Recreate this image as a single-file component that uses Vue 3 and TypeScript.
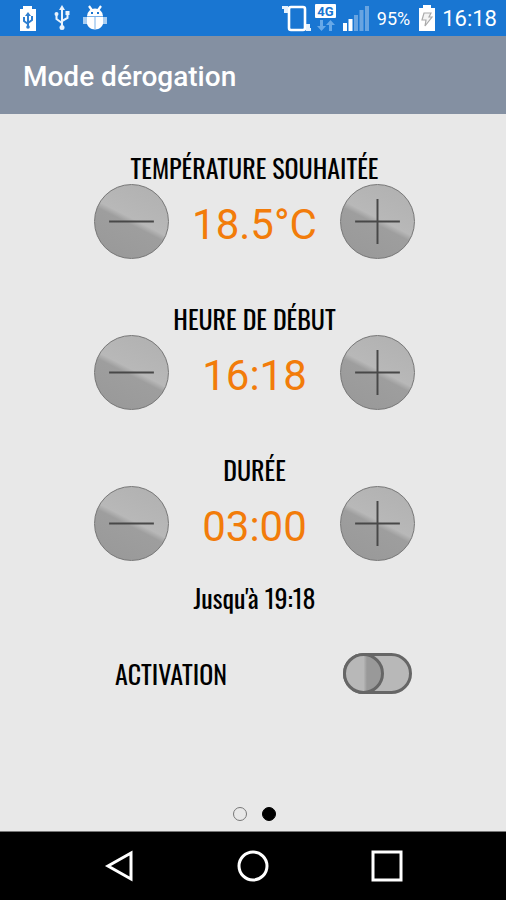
<script setup lang="ts">
import { computed, ref } from 'vue'

type Field = 'temp' | 'start' | 'duration'

const temperature = ref(18.5)
const start = ref(16 * 60 + 18)
const duration = ref(180)
const active = ref(false)

function clock(minutes: number): string {
  const m = ((minutes % 1440) + 1440) % 1440
  return `${String(Math.floor(m / 60)).padStart(2, '0')}:${String(m % 60).padStart(2, '0')}`
}

const fields = computed(() => [
  { id: 'temp' as Field, label: 'TEMPÉRATURE SOUHAITÉE', value: `${temperature.value.toFixed(1)}°C` },
  { id: 'start' as Field, label: 'HEURE DE DÉBUT', value: clock(start.value) },
  { id: 'duration' as Field, label: 'DURÉE', value: clock(duration.value) },
])
const until = computed(() => clock(start.value + duration.value))

function step(id: Field, dir: number) {
  if (id === 'temp') temperature.value += dir * 0.5
  else if (id === 'start') start.value += dir
  else duration.value = Math.max(0, duration.value + dir * 30)
}
</script>

<template>
  <div class="screen">
    <div class="status">
      <div class="status-side">
        <svg class="s-usbbat" width="18" height="28" viewBox="0 0 18 28">
          <path d="M4 2h9v3h4v22H1V5h3z" fill="#fff" />
          <path d="M9 10v14M5 13v4l4 3M13 12v4l-4 3" fill="none" stroke="#2f7fd0" stroke-width="2" />
          <path d="M6 12l3-4 3 4z" fill="#2f7fd0" />
          <circle cx="9" cy="23" r="1.800" fill="#2f7fd0" />
        </svg>
        <svg class="s-usb" width="16" height="26" viewBox="0 0 16 26">
          <path d="M8 4v18M2.500 9v5l5.500 4M13.500 8v5L8 16" fill="none" stroke="#e9f3fd" stroke-width="2" />
          <path d="M5 5l3-5 3 5z" fill="#e9f3fd" />
          <circle cx="8" cy="22.500" r="2.500" fill="#e9f3fd" />
          <circle cx="2.500" cy="9" r="2" fill="#e9f3fd" />
          <path d="M11.500 6h4v4h-4z" fill="#e9f3fd" />
        </svg>
        <svg class="s-bug" width="26" height="26" viewBox="0 0 26 26">
          <path d="M7 1l3.500 5M19 1l-3.500 5" stroke="#fff" stroke-width="2.200" />
          <path d="M5 11a8 7.500 0 0 1 16 0z" fill="#fff" />
          <path d="M4.500 12h17v4c0 5-4 8.500-8.500 8.500S4.500 21 4.500 16z" fill="#fff" />
          <path d="M1 12h4v7H1zM21 12h4v7h-4z" fill="#a9cef2" />
          <path d="M5 11.500h16M13 12v12" stroke="#79b0e8" stroke-width="1" />
          <path d="M9 8h2M15 8h2" stroke="#1976d2" stroke-width="1.800" />
        </svg>
      </div>
      <div class="status-side">
        <svg width="32" height="30" viewBox="0 0 32 30">
          <rect x="8" y="4" width="16" height="23" rx="2" fill="none" stroke="#fff" stroke-width="2.600" />
          <path d="M7 3H1v3h2v4h4zM25 28h5v-3h-1v-4h-4z" fill="#e6f1fc" />
        </svg>
        <svg class="s-net" width="22" height="28" viewBox="0 0 22 28">
          <rect width="21" height="14" rx="1" fill="#fff" />
          <text x="10.500" y="11.500" text-anchor="middle" class="net-text">4G</text>
          <path d="M5 16h3v6h3l-4.500 5L2 22h3zM14 27v-6h-3l4.500-5 4.500 5h-3v6z" fill="#68a9e8" />
        </svg>
        <svg class="s-signal" width="28" height="28" viewBox="0 0 28 28">
          <path d="M1 19h4v8H1zM6.500 15h4v12h-4z" fill="#fff" />
          <path d="M12 11h4v16h-4zM17.500 6h4v21h-4zM23 2h4v25h-4z" fill="#68a4e1" />
        </svg>
        <span class="percent">95%</span>
        <svg class="s-charge" width="18" height="28" viewBox="0 0 18 28">
          <path d="M5 1h8v3h4v23H1V4h4z" fill="#fff" />
          <path d="M6 9h7l-2 4h3l-7 9 1-6H4z" fill="#f3f3f3" stroke="#aaa" stroke-width="1.200" />
        </svg>
        <span class="time">16:18</span>
      </div>
    </div>

    <header class="bar"><h1>Mode dérogation</h1></header>

    <main class="content">
      <section v-for="f in fields" :key="f.id" class="field">
        <h2 :id="f.id" class="label">{{ f.label }}</h2>
        <div class="row" role="group" :aria-labelledby="f.id">
          <button type="button" class="round" aria-label="Diminuer" @click="step(f.id, -1)">
            <svg viewBox="0 0 75 75"><path d="M14.500 37.500h46" /></svg>
          </button>
          <output class="value">{{ f.value }}</output>
          <button type="button" class="round" aria-label="Augmenter" @click="step(f.id, 1)">
            <svg viewBox="0 0 75 75"><path d="M14.500 37.500h46M37.500 14.500v46" /></svg>
          </button>
        </div>
      </section>
      <p class="label until">Jusqu'à {{ until }}</p>
      <div class="activation">
        <label class="label" for="activation">ACTIVATION</label>
        <input id="activation" v-model="active" class="switch" type="checkbox" role="switch" />
      </div>
      <div class="dots">
        <button type="button" class="dot" aria-label="Page 1"></button>
        <button type="button" class="dot current" aria-label="Page 2" aria-current="true"></button>
      </div>
    </main>

    <nav class="nav">
      <button type="button" aria-label="Retour">
        <svg width="32" height="32" viewBox="0 0 32 32"><path d="M28 3v26L5 16z" /></svg>
      </button>
      <button type="button" aria-label="Accueil">
        <svg width="32" height="32" viewBox="0 0 32 32"><circle cx="16" cy="16" r="14" /></svg>
      </button>
      <button type="button" aria-label="Applications récentes">
        <svg width="32" height="32" viewBox="0 0 32 32"><rect x="2" y="2" width="28" height="28" /></svg>
      </button>
    </nav>
  </div>
</template>

<style>
body {
  margin: 0;
  background: #e8e8e8;
}
</style>

<style scoped>
.screen {
  display: flex;
  flex-direction: column;
  min-height: 100vh;
  background: #e8e8e8;
  font-family: Roboto, "Liberation Sans", sans-serif;
}
.status {
  display: flex;
  justify-content: space-between;
  height: 36px;
  padding: 0 9px 0 19px;
  background: #1976d2;
  color: #fff;
}
.status-side {
  display: flex;
  align-items: center;
}
.s-usb {
  margin-left: 17px;
}
.s-bug {
  margin-left: 12px;
}
.s-net {
  margin-left: 2px;
}
.net-text {
  font: bold 13px Roboto, sans-serif;
  fill: #1976d2;
}
.s-signal {
  margin-left: 5px;
}
.percent {
  margin-left: 7px;
  font-size: 18px;
}
.s-charge {
  margin: 0 6px 0 8px;
}
.time {
  font-size: 22px;
}
.bar {
  display: flex;
  align-items: center;
  height: 78px;
  padding: 2px 23px 0;
  box-sizing: border-box;
  background: #8490a2;
}
h1 {
  margin: 0;
  color: #fff;
  font-size: 28px;
  font-weight: 500;
}
.content {
  display: flex;
  flex: 1;
  flex-direction: column;
  padding: 38px 91px 10px 94px;
}
.field {
  margin-bottom: 44px;
}
.label {
  margin: 0;
  color: #000;
  font-family: Oswald, "Roboto Condensed", "Liberation Sans Narrow", sans-serif;
  font-size: 26px;
  font-weight: 400;
  line-height: 32px;
  text-align: center;
  white-space: nowrap;
}
.row {
  display: flex;
  align-items: center;
  justify-content: space-between;
}
.round {
  width: 75px;
  height: 75px;
  padding: 0;
  border: 1px solid #777;
  border-radius: 50%;
  background: linear-gradient(207deg, #b0b0b0 0, #b8b8b8 47%, #9e9e9e 53%, #989898 100%);
}
.round svg {
  display: block;
  fill: none;
  stroke: #484848;
  stroke-width: 2;
}
.value {
  padding-top: 6px;
  color: #f27c0a;
  font-size: 42px;
  line-height: 50px;
}
.until {
  margin-top: -23px;
}
.activation {
  display: flex;
  align-items: center;
  justify-content: space-between;
  margin-top: 39px;
  padding: 0 3px 0 21px;
}
.switch {
  display: flex;
  width: 69px;
  height: 41px;
  margin: 0;
  border: 3px solid #666;
  border-radius: 21px;
  appearance: none;
  background: #b8b8b8;
}
.switch::before {
  content: "";
  box-sizing: border-box;
  width: 41px;
  height: 41px;
  margin: -3px;
  border: 3px solid #666;
  border-radius: 50%;
  background: linear-gradient(90deg, #b8b8b8 50%, #999 60%);
}
.switch:checked {
  justify-content: flex-end;
}
.dots {
  display: flex;
  justify-content: center;
  gap: 15px;
  margin-top: auto;
}
.dot {
  width: 14px;
  height: 14px;
  padding: 0;
  border: 1px solid #777;
  border-radius: 50%;
  background: transparent;
}
.current {
  border-color: #000;
  background: #000;
}
.nav {
  display: flex;
  align-items: center;
  justify-content: space-around;
  height: 68px;
  padding: 0 52px;
  border-top: 1px solid #777;
  background: #000;
}
.nav button {
  padding: 0;
  border: 0;
  background: none;
}
.nav svg {
  display: block;
  fill: none;
  stroke: #fff;
  stroke-width: 3;
}
</style>
